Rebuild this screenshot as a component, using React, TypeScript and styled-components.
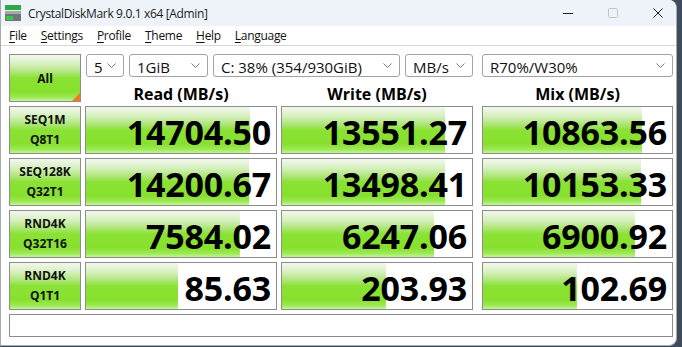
import React from 'react';
import styled, { createGlobalStyle, css } from 'styled-components';

type Result = { value: string; fill: number };
type TestRow = { name: string; params: string; read: Result; write: Result; mix: Result };

const rows: TestRow[] = [
  {
    name: 'SEQ1M', params: 'Q8T1',
    read: { value: '14704.50', fill: 0.863 },
    write: { value: '13551.27', fill: 0.858 },
    mix: { value: '10863.56', fill: 0.841 },
  },
  {
    name: 'SEQ128K', params: 'Q32T1',
    read: { value: '14200.67', fill: 0.858 },
    write: { value: '13498.41', fill: 0.858 },
    mix: { value: '10153.33', fill: 0.836 },
  },
  {
    name: 'RND4K', params: 'Q32T16',
    read: { value: '7584.02', fill: 0.81 },
    write: { value: '6247.06', fill: 0.8 },
    mix: { value: '6900.92', fill: 0.804 },
  },
  {
    name: 'RND4K', params: 'Q1T1',
    read: { value: '85.63', fill: 0.484 },
    write: { value: '203.93', fill: 0.547 },
    mix: { value: '102.69', fill: 0.497 },
  },
];

const menuItems = ['File', 'Settings', 'Profile', 'Theme', 'Help', 'Language'];

const GlobalStyle = createGlobalStyle`
  html, body {
    margin: 0;
    padding: 0;
    background: #3d4b5c;
  }
  body {
    font-family: "Open Sans", "Noto Sans", sans-serif;
    color: #000;
  }
`;

const greenGradient = css`
  linear-gradient(
    to bottom,
    #f3f7ef 0%,
    #d6f0be 20%,
    #a8e46c 40%,
    #8ae233 50%,
    #88e02e 80%,
    #9ce954 92%,
    #c3f498 100%
  )
`;

const Window = styled.div`
  width: 677px;
  height: 346px;
  box-sizing: border-box;
  background: #ffffff;
  border: 1px solid #a7acb3;
  border-top: none;
  border-radius: 0 8px 8px 0;
  overflow: hidden;
  display: flex;
  flex-direction: column;
`;

const TitleBar = styled.div`
  height: 26px;
  flex-shrink: 0;
  display: flex;
  align-items: center;
  background: #eef3f9;
  padding-left: 4px;
`;

const AppTitle = styled.span`
  margin-left: 7px;
  font-size: 12px;
  letter-spacing: -0.35px;
  color: #1b1b1b;
`;

const Controls = styled.div`
  margin-left: auto;
  display: flex;
  align-items: center;
  gap: 35px;
  padding-right: 13px;
`;

const ControlButton = styled.span<{ $disabled?: boolean }>`
  width: 10px;
  height: 10px;
  display: flex;
  align-items: center;
  justify-content: center;
  color: ${({ $disabled }) => ($disabled ? '#c4c4c4' : '#1b1b1b')};
`;

const MenuBar = styled.div`
  height: 19px;
  flex-shrink: 0;
  display: flex;
  align-items: center;
  gap: 14px;
  padding-left: 8px;
  border-bottom: 1px solid #d6d6d6;
  font-size: 12px;
  letter-spacing: -0.3px;
`;

const MenuItem = styled.span`
  color: #111;
  u {
    text-decoration-thickness: 1px;
    text-underline-offset: 2px;
  }
`;

const Board = styled.div`
  display: grid;
  grid-template-columns: 72px 192px 192px 196px;
  grid-template-rows: 23px 21px repeat(4, 48px) 23px;
  gap: 4px;
  padding: 8px 0 0 8px;
`;

const AllButton = styled.div`
  grid-row: 1 / 3;
  position: relative;
  box-sizing: border-box;
  border: 1px solid #8d8d8d;
  background: ${greenGradient};
  display: flex;
  align-items: center;
  justify-content: center;
  font-weight: 700;
  font-size: 12px;
  color: #111;

  &::after {
    content: '';
    position: absolute;
    right: 0;
    bottom: 0;
    border-style: solid;
    border-width: 0 0 8px 8px;
    border-color: transparent transparent #f07a1e transparent;
  }
`;

const SelectRow = styled.div`
  grid-column: 2 / 4;
  display: flex;
  gap: 5px;
  padding-left: 1px;
`;

const Select = styled.div<{ $width?: number; $mix?: boolean }>`
  box-sizing: border-box;
  height: 23px;
  width: ${({ $width }) => ($width ? `${$width}px` : 'auto')};
  flex-shrink: 0;
  margin-left: ${({ $mix }) => ($mix ? '5px' : '0')};
  display: flex;
  align-items: center;
  justify-content: space-between;
  padding: 0 7px 0 7px;
  border: 1px solid #a3a3a3;
  border-radius: 3px;
  background: #ffffff;
  font-size: 15px;
  color: #111;
  white-space: nowrap;

  span {
    padding-top: 2px;
  }
`;

const ColumnHeader = styled.div<{ $mix?: boolean }>`
  margin-left: ${({ $mix }) => ($mix ? '5px' : '0')};
  text-align: center;
  font-weight: 700;
  font-size: 16px;
  line-height: 21px;
  padding-top: 3px;
  white-space: nowrap;
`;

const TestLabel = styled.div`
  box-sizing: border-box;
  border: 1px solid #8d8d8d;
  background: ${greenGradient};
  display: flex;
  flex-direction: column;
  align-items: center;
  justify-content: center;
  font-weight: 700;
  font-size: 12px;
  line-height: 20px;
  color: #111;
`;

const ValueCell = styled.div<{ $mix?: boolean }>`
  box-sizing: border-box;
  margin-left: ${({ $mix }) => ($mix ? '5px' : '0')};
  border: 1px solid #8d8d8d;
  background-color: #ffffff;
  background-image: ${greenGradient};
  background-repeat: no-repeat;
  display: flex;
  align-items: center;
  justify-content: flex-end;
  padding: 3px 5px 0 0;
  font-weight: 700;
  font-size: 34px;
  line-height: 1;
  letter-spacing: -0.2px;
  color: #000;
`;

const CommentBox = styled.div`
  grid-column: 1 / -1;
  box-sizing: border-box;
  border: 1px solid #8d8d8d;
  background: #ffffff;
`;

const Chevron = () => (
  <svg width="9" height="5" viewBox="0 0 9 5">
    <polyline points="0.5,0.5 4.5,4.5 8.5,0.5" fill="none" stroke="#7a7a7a" strokeWidth="1" />
  </svg>
);

const AppIcon = () => (
  <svg width="16" height="16" viewBox="0 0 16 16">
    <rect x="0" y="0" width="16" height="5" fill="#2ea84a" />
    <rect x="0" y="5" width="16" height="1" fill="#e6eee6" />
    <rect x="0" y="6" width="16" height="3" fill="#a3aaa8" />
    <rect x="0" y="9" width="16" height="7" fill="#6e7775" />
    <rect x="1" y="11" width="7" height="4" fill="#3cc44e" />
  </svg>
);

const ValueBox: React.FC<{ result: Result; mix?: boolean }> = ({ result, mix }) => (
  <ValueCell $mix={mix} style={{ backgroundSize: `${result.fill * 100}% 100%` }}>
    {result.value}
  </ValueCell>
);

export default function App() {
  return (
    <>
      <GlobalStyle />
      <Window>
        <TitleBar>
          <AppIcon />
          <AppTitle>CrystalDiskMark 9.0.1 x64 [Admin]</AppTitle>
          <Controls>
            <ControlButton>
              <svg width="10" height="10" viewBox="0 0 10 10">
                <line x1="0" y1="5.5" x2="10" y2="5.5" stroke="currentColor" strokeWidth="1" />
              </svg>
            </ControlButton>
            <ControlButton $disabled>
              <svg width="10" height="10" viewBox="0 0 10 10">
                <rect x="0.5" y="0.5" width="9" height="9" rx="1" fill="none" stroke="currentColor" strokeWidth="1" />
              </svg>
            </ControlButton>
            <ControlButton>
              <svg width="10" height="10" viewBox="0 0 10 10">
                <path d="M0.5 0.5 L9.5 9.5 M9.5 0.5 L0.5 9.5" stroke="currentColor" strokeWidth="1" />
              </svg>
            </ControlButton>
          </Controls>
        </TitleBar>

        <MenuBar>
          {menuItems.map(item => (
            <MenuItem key={item}>
              <u>{item[0]}</u>
              {item.slice(1)}
            </MenuItem>
          ))}
        </MenuBar>

        <Board>
          <AllButton>All</AllButton>
          <SelectRow>
            <Select $width={38}><span>5</span><Chevron /></Select>
            <Select $width={79}><span>1GiB</span><Chevron /></Select>
            <Select $width={187}><span>C: 38% (354/930GiB)</span><Chevron /></Select>
            <Select $width={68}><span>MB/s</span><Chevron /></Select>
          </SelectRow>
          <Select $mix><span>R70%/W30%</span><Chevron /></Select>

          <ColumnHeader>Read (MB/s)</ColumnHeader>
          <ColumnHeader>Write (MB/s)</ColumnHeader>
          <ColumnHeader $mix>Mix (MB/s)</ColumnHeader>

          {rows.map(row => (
            <React.Fragment key={row.name + row.params}>
              <TestLabel>
                <span>{row.name}</span>
                <span>{row.params}</span>
              </TestLabel>
              <ValueBox result={row.read} />
              <ValueBox result={row.write} />
              <ValueBox result={row.mix} mix />
            </React.Fragment>
          ))}

          <CommentBox />
        </Board>
      </Window>
    </>
  );
}
